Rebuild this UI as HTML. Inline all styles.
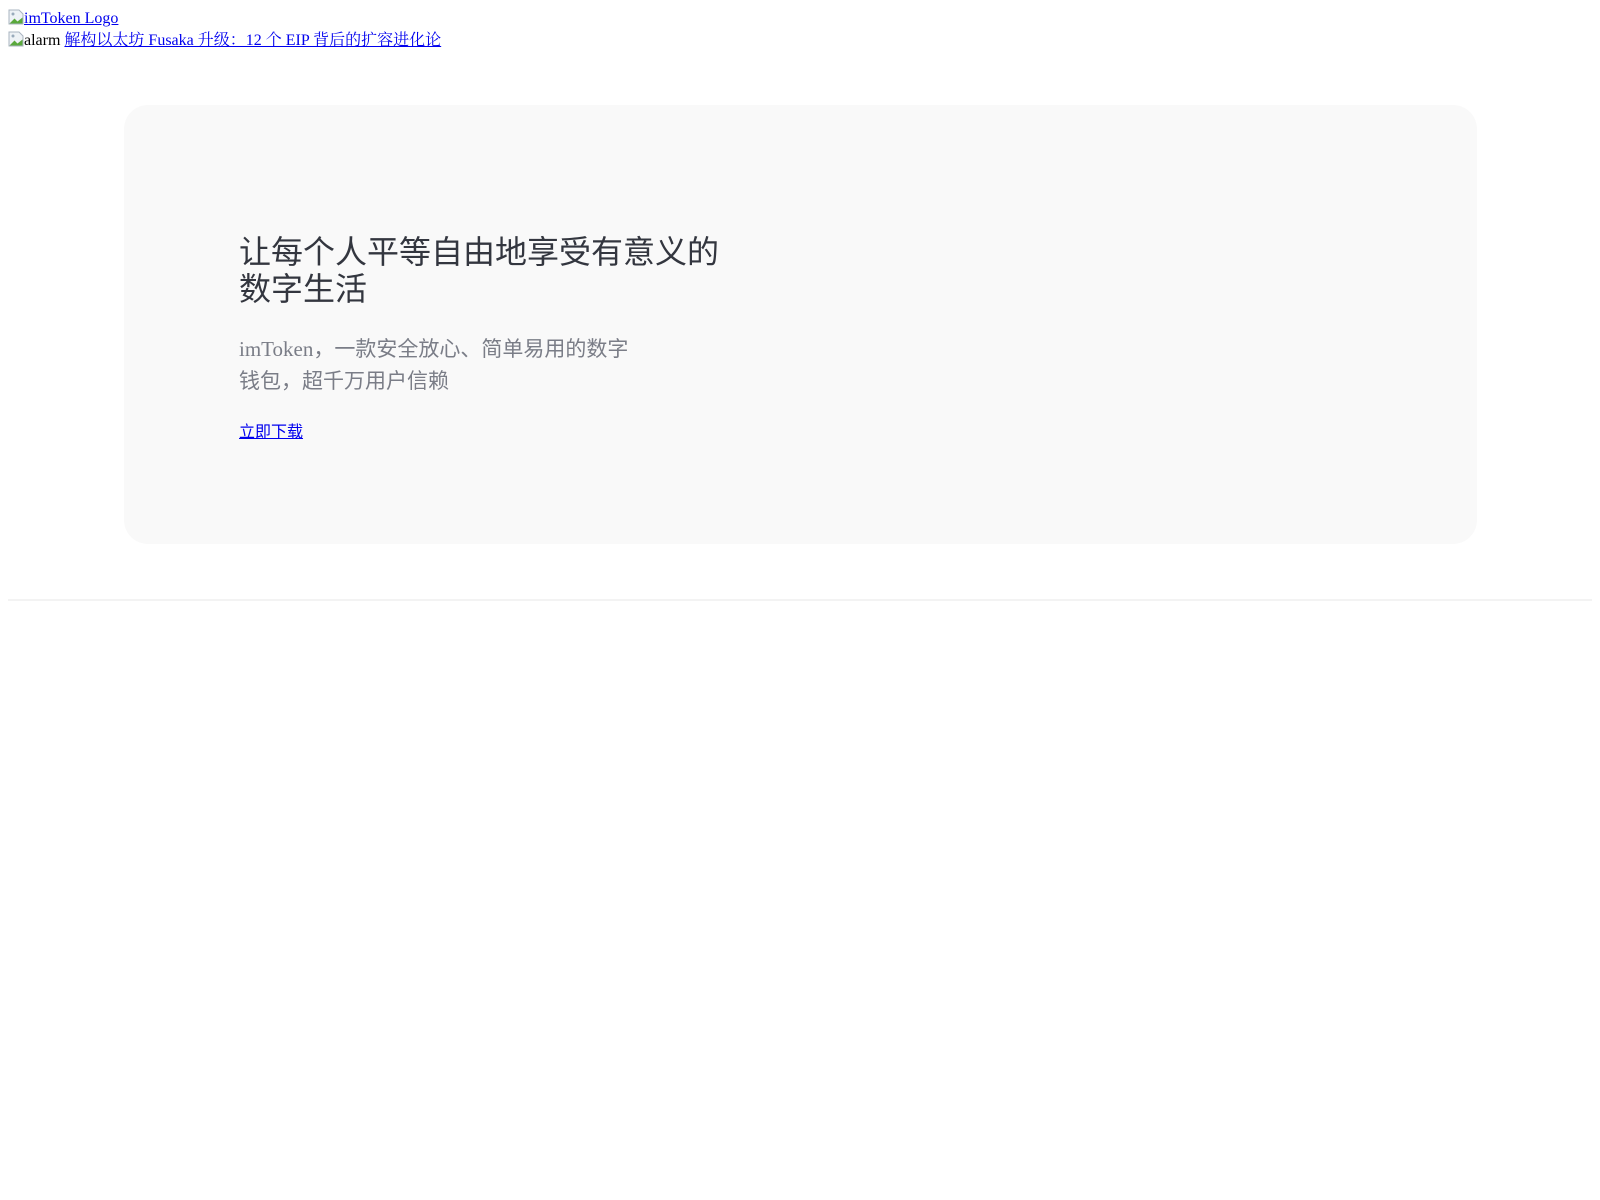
<!DOCTYPE html>
<html><head><meta charset="utf-8"><style>
body{margin:8px;font-family:"Liberation Serif","Noto Serif CJK SC",serif;font-size:16px;background:#fff;}
.l{height:22px;line-height:22px;white-space:nowrap;}
.l svg{vertical-align:-2px;}
a{color:#0000ee;}
.card{position:absolute;left:124px;top:105px;width:1353px;height:439px;background:#f9f9f9;border-radius:24px;}
h1{position:absolute;left:239px;top:234px;margin:0;font:32px/37px "Liberation Sans","Noto Sans CJK SC",sans-serif;color:#33363f;font-weight:normal;}
p{position:absolute;left:239px;top:333px;margin:0;font-family:"Liberation Serif","Noto Sans CJK SC",serif;font-size:21px;line-height:32px;color:#7a7d87;}
.dl{position:absolute;left:239px;top:424px;line-height:18px;font-family:"Liberation Serif","Noto Sans CJK SC",serif;}
.hr{position:absolute;left:8px;top:599px;width:1584px;height:2px;background:#f3f3f3;}
</style></head><body>
<div class="l"><svg width="16" height="16" viewBox="0 0 16 16"><path d="M1 1h10l4 4v10H1z" fill="#eef2f6" stroke="#a9b4c0"/><path d="M1.5 14.5l5-5 3 3 5-4v6z" fill="#5aa93c"/><circle cx="5" cy="5" r="1.5" fill="#9ab"/></svg><a href="#">imToken Logo</a></div>
<div class="l"><svg width="16" height="16" viewBox="0 0 16 16"><path d="M1 1h10l4 4v10H1z" fill="#eef2f6" stroke="#a9b4c0"/><path d="M1.5 14.5l5-5 3 3 5-4v6z" fill="#5aa93c"/><circle cx="5" cy="5" r="1.5" fill="#9ab"/></svg>alarm <a href="#">解构以太坊 Fusaka 升级：12 个 EIP 背后的扩容进化论</a></div>
<div class="card"></div>
<h1>让每个人平等自由地享受有意义的<br>数字生活</h1>
<p>imToken，一款安全放心、简单易用的数字<br>钱包，超千万用户信赖</p>
<div class="dl"><a href="#">立即下载</a></div>
<div class="hr"></div>
</body></html>
